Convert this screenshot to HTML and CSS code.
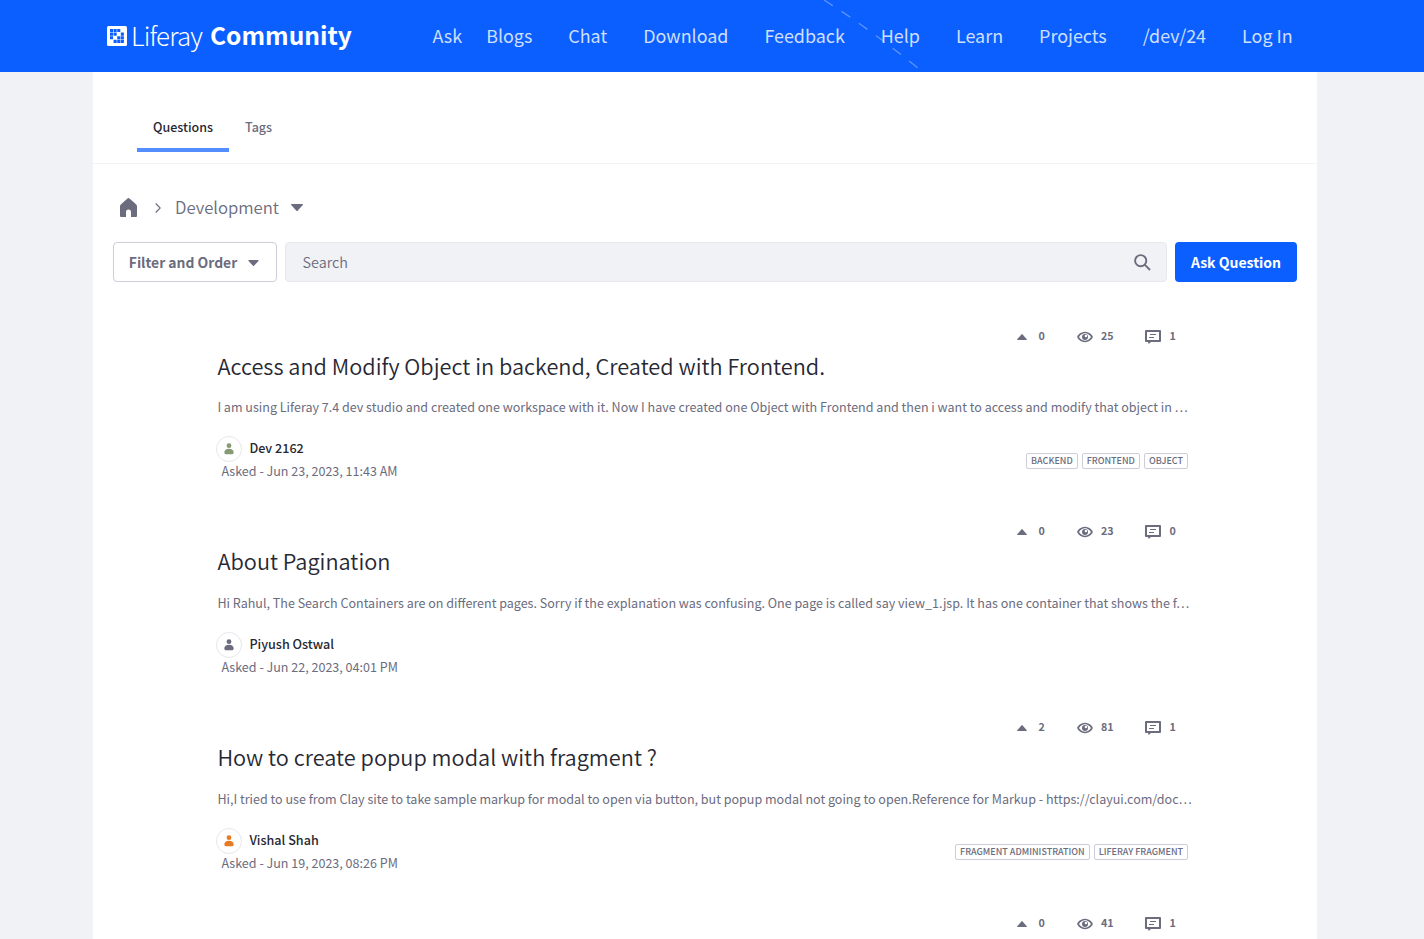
FILE: index.html
```html
<!DOCTYPE html>
<html lang="en">
<head>
<meta charset="utf-8">
<title>Liferay Community</title>
<link rel="stylesheet" href="styles.css">
</head>
<body>
<svg class="sprite" aria-hidden="true">
  <symbol id="up" viewBox="0 0 10 6"><path d="M4.400.4a.8.8 0 0 1 1.200 0L9.800 5.200c.3.400.1.800-.4.800H.6c-.5 0-.7-.4-.4-.8z"/></symbol>
  <symbol id="down" viewBox="0 0 12 7"><path d="M.7 0h10.600c.7 0 .9.7.5 1.100L6.600 6.700a.8.8 0 0 1-1.200 0L.2 1.100C-.2.7 0 0 .7 0z"/></symbol>
  <symbol id="eye" viewBox="0 0 16 12"><path fill-rule="evenodd" d="M8 .8C3.500.8.2 4.700.2 6S3.500 11.200 8 11.200 15.800 7.300 15.800 6 12.500.8 8 .8zm0 1.500c3.200 0 5.500 2.700 5.900 3.700C13.500 7 11.200 9.700 8 9.700S2.500 7 2.100 6C2.500 5 4.800 2.300 8 2.300z"/><path fill-rule="evenodd" d="M8 3a3 3 0 1 0 0 6 3 3 0 0 0 0-6zm.9.8a1.200 1.200 0 1 1 0 2.400 1.200 1.200 0 0 1 0-2.400z"/></symbol>
  <symbol id="comment" viewBox="0 0 16 14"><path fill-rule="evenodd" d="M1 0h14a1 1 0 0 1 1 1v10a1 1 0 0 1-1 1H6l-2.300 2L3 12H1a1 1 0 0 1-1-1V1a1 1 0 0 1 1-1zm1 2v8h12V2z"/><path d="M5 4h6v1H5zM4 7h5v1H4z"/></symbol>
  <symbol id="user" viewBox="0 0 10 12"><circle cx="5" cy="2.700" r="2.400"/><path d="M5 5.800c2.800 0 4.700 1.600 4.700 3.600 0 1.200-1.100 1.900-2.300 1.900H2.600C1.400 11.300.3 10.600.3 9.400.3 7.400 2.200 5.800 5 5.800z"/></symbol>
</svg>
<header class="topbar">
  <svg class="swoosh" viewBox="0 0 110 72"><path d="M24 0Q70 29 119 69"/></svg>
  <a class="brand">
    <svg class="brand-mark" viewBox="0 0 20 20"><rect width="20" height="20" rx="1.500" fill="#fff"/><path fill="#0b5fff" d="M3 3h3.100v3.100H3zM6.600 3h3.100v3.100H6.600zM10.200 3h3.100v3.100h-3.100zM3 6.600h3.100v3.100H3zM6.600 6.600h3.100v3.100H6.600zM13.800 6.600h3.100v3.100h-3.100zM3 10.200h3.100v3.100H3zM10.200 10.200h3.100v3.100h-3.100zM13.800 10.200h3.100v3.100h-3.100zM6.600 13.800h3.100v3.100H6.600zM10.200 13.800h3.100v3.100h-3.100zM13.800 13.800h3.100v3.100h-3.100z"/></svg>
    <span class="brand-thin">Liferay</span><span class="brand-bold">Community</span>
  </a>
  <nav class="menu"><a class="ask">Ask</a><a>Blogs</a><a>Chat</a><a>Download</a><a>Feedback</a><a>Help</a><a>Learn</a><a>Projects</a><a>/dev/24</a><a>Log In</a></nav>
</header>
<main class="page">
  <nav class="tabs"><a class="tab active">Questions</a><a class="tab">Tags</a></nav>
  <div class="crumbs">
    <svg class="home" viewBox="0 0 17 19"><path d="M7.500.5a1.500 1.500 0 0 1 2 0L16 6.200c.6.500 1 1.300 1 2V18a1 1 0 0 1-1 1h-5v-5a2 2 0 0 0-5 0v5H1a1 1 0 0 1-1-1V8.200c0-.7.400-1.500 1-2z"/></svg>
    <svg class="chev" viewBox="0 0 6 10"><path d="M.7.500 5.200 5 .7 9.500"/></svg>
    <span class="topic">Development</span>
    <svg class="caret"><use href="#down"/></svg>
  </div>
  <div class="tools">
    <button class="filter"><span>Filter and Order</span><svg><use href="#down"/></svg></button>
    <div class="search"><span>Search</span><svg viewBox="0 0 17 17"><circle cx="6.700" cy="6.700" r="5.600"/><path d="m10.700 10.700 5.300 5.300"/></svg></div>
    <button class="question">Ask Question</button>
  </div>
  <section class="list">
    <article class="item">
      <div class="stats"><span class="votes"><svg><use href="#up"/></svg>0</span><span class="views"><svg><use href="#eye"/></svg>25</span><span class="replies"><svg><use href="#comment"/></svg>1</span></div>
      <h2>Access and Modify Object in backend, Created with Frontend.</h2>
      <p>I am using Liferay 7.4 dev studio and created one workspace with it. Now I have created one Object with Frontend and then i want to access and modify that object in …</p>
      <div class="foot"><div><div class="author"><span class="avatar green"><svg><use href="#user"/></svg></span><span class="name">Dev 2162</span></div><div class="date">Asked - Jun 23, 2023, 11:43 AM</div></div>
      <div class="labels"><span>BACKEND</span><span>FRONTEND</span><span>OBJECT</span></div></div>
    </article>
    <article class="item">
      <div class="stats"><span class="votes"><svg><use href="#up"/></svg>0</span><span class="views"><svg><use href="#eye"/></svg>23</span><span class="replies"><svg><use href="#comment"/></svg>0</span></div>
      <h2>About Pagination</h2>
      <p>Hi Rahul, The Search Containers are on different pages. Sorry if the explanation was confusing. One page is called say view_1.jsp. It has one container that shows the f…</p>
      <div class="foot"><div><div class="author"><span class="avatar"><svg><use href="#user"/></svg></span><span class="name">Piyush Ostwal</span></div><div class="date">Asked - Jun 22, 2023, 04:01 PM</div></div></div>
    </article>
    <article class="item">
      <div class="stats"><span class="votes"><svg><use href="#up"/></svg>2</span><span class="views"><svg><use href="#eye"/></svg>81</span><span class="replies"><svg><use href="#comment"/></svg>1</span></div>
      <h2>How to create popup modal with fragment ?</h2>
      <p>Hi,I tried to use from Clay site to take sample markup for modal to open via button, but popup modal not going to open.Reference for Markup - https://clayui.com/doc…</p>
      <div class="foot"><div><div class="author"><span class="avatar orange"><svg><use href="#user"/></svg></span><span class="name">Vishal Shah</span></div><div class="date">Asked - Jun 19, 2023, 08:26 PM</div></div>
      <div class="labels"><span>FRAGMENT ADMINISTRATION</span><span>LIFERAY FRAGMENT</span></div></div>
    </article>
    <article class="item last">
      <div class="stats"><span class="votes"><svg><use href="#up"/></svg>0</span><span class="views"><svg><use href="#eye"/></svg>41</span><span class="replies"><svg><use href="#comment"/></svg>1</span></div>
    </article>
  </section>
</main>
</body>
</html>
```
FILE: styles.css
```css
* { box-sizing: border-box; }
html, body { height: 100%; }
body { margin: 0; overflow: hidden; background: #f1f2f5; color: #272833; font-family: "Noto Sans CJK SC", "Noto Sans", sans-serif; display: flex; flex-direction: column; }
svg { display: block; flex: none; fill: currentColor; }
.sprite { position: absolute; width: 0; height: 0; }
button { font: inherit; }
.topbar { position: relative; flex: none; height: 72px; background: #0b5fff; color: #fff; display: flex; align-items: center; padding-left: 107px; white-space: nowrap; }
.swoosh { position: absolute; left: 800px; top: 0; width: 110px; height: 72px; overflow: visible; fill: none; stroke: #5c95ff; stroke-width: 1.300; stroke-dasharray: 10.500 10.500; }
.brand { position: relative; display: flex; align-items: center; width: 325.500px; line-height: 40px; }
.brand-mark { width: 20px; height: 20px; margin-right: 4px; }
.brand-thin { font-size: 25.800px; font-weight: 200; width: 79px; letter-spacing: -0.8px; padding-bottom: 3px; }
.brand-bold { font-size: 24.500px; font-weight: 700; padding-bottom: 2px; }
.menu { position: relative; display: flex; gap: 36px; font-size: 17.920px; line-height: 24px; color: #cedfff; padding-bottom: 2px; }
.ask { margin-right: -12px; }
.page { flex: 1; min-height: 0; overflow: hidden; width: 1224px; margin-left: 93px; background: #fff; color: #6b6c7e; }
.tabs { height: 92px; border-bottom: 1px solid #f1f2f5; padding: 36px 0 0 44px; display: flex; font-size: 12.500px; font-weight: 500; line-height: 38px; }
.tab { height: 44px; padding: 0 16px; }
.tab.active { color: #272833; border-bottom: 4px solid #528eff; }
.crumbs { display: flex; align-items: center; height: 78px; padding: 9px 0 0 27px; }
.home { width: 17px; height: 19px; }
.chev { width: 6px; height: 10px; margin: 0 14.500px 0 17.500px; fill: none; stroke: #6b6c7e; stroke-width: 1.100; }
.topic { font-size: 16.700px; font-weight: 350; width: 104px; line-height: 24px; padding-bottom: 1px; white-space: nowrap; }
.caret { width: 12px; height: 7px; margin-left: 11.500px; }
.tools { display: flex; gap: 8px; height: 40px; padding: 0 20px; }
.filter { width: 164px; border: 1px solid #cdced9; border-radius: 4px; background: #fff; color: #6b6c7e; font-size: 13.900px; font-weight: 600; padding: 0 0 0 14.500px; display: flex; align-items: center; gap: 10px; white-space: nowrap; }
.filter span { padding-bottom: 1px; width: 109px; }
.filter svg { width: 11px; height: 6px; margin-top: 2px; }
.search { width: 882px; border: 1px solid #e7e7ed; border-radius: 4px; background: #f1f2f5; display: flex; align-items: center; justify-content: space-between; padding: 0 15.500px 0 16.500px; font-size: 14.400px; font-weight: 350; }
.search span { padding-bottom: 2px; }
.search svg { width: 17px; height: 17px; fill: none; stroke: #6b6c7e; stroke-width: 1.900; }
.question { width: 122px; border: 0; border-radius: 4px; background: #0b5fff; color: #fff; font-size: 14px; font-weight: 600; padding: 0 0 .5px; white-space: nowrap; }
.list { padding: 43.800px 129px 0 124.400px; }
.item { height: 195.670px; }
.item.last { height: auto; }
.stats { display: flex; height: 20px; padding-left: 799.600px; font-size: 10.700px; font-weight: 600; line-height: 20px; }
.stats span { display: flex; align-items: center; }
.stats svg { position: relative; top: 1px; }
.votes { width: 60px; } .votes svg { width: 10px; height: 6px; margin-right: 11.500px; }
.views { width: 68px; } .views svg { width: 16px; height: 12px; margin-right: 8px; }
.replies svg { width: 16px; height: 14px; margin-right: 8.500px; }
h2 { margin: 4px 0 0; font-size: 21.720px; line-height: 32px; font-weight: 350; color: #272833; white-space: nowrap; }
p { margin: 14.400px 0 0; font-size: 12.540px; line-height: 21px; white-space: nowrap; }
.foot { display: flex; justify-content: space-between; align-items: center; margin-top: 19px; }
.author { display: flex; align-items: center; height: 26px; color: #272833; font-size: 12.600px; font-weight: 500; line-height: 18px; }
.name { padding-bottom: 2px; }
.avatar { width: 26px; height: 26px; margin: 0 7px 0 -1px; border: 1px solid #e7e7ed; border-radius: 50%; color: #6b6c7e; display: grid; place-items: center; }
.avatar svg { width: 10px; height: 12px; }
.green { color: #869b75; } .orange { color: #ea7a22; }
.date { padding-left: 4px; font-size: 12.540px; line-height: 18px; }
.labels { display: flex; gap: 4px; padding-top: 5.800px; }
.labels span { height: 16px; padding: 0 4px; border: 1px solid #cdced9; border-radius: 2px; font-size: 9px; font-weight: 500; line-height: 14px; }
```
